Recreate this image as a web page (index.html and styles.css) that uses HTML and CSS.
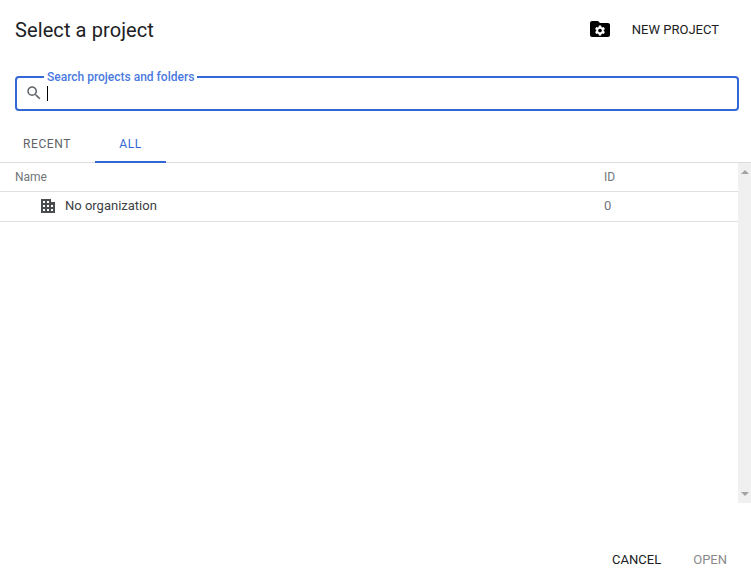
FILE: index.html
```html
<!DOCTYPE html>
<html>
<head>
    <title>Select a project</title>
    <link rel="stylesheet" href="styles.css">
</head>
<body>
    <div class="dialog">
        <div class="header">
            <h1 class="title">Select a project</h1>
            <svg class="new-icon" viewBox="0 0 24 24" width="24" height="24">
                <path d="M10 4H4c-1.100 0-2 .9-2 2v12c0 1.100.9 2 2 2h16c1.100 0 2-.9 2-2V8c0-1.100-.9-2-2-2h-8l-2-2z"/>
                <path fill="#fff" transform="translate(12 13.500) scale(.52) translate(-12 -12)" d="M19.140 12.940c.04-.3.06-.61.06-.94 0-.32-.02-.64-.07-.94l2.030-1.580a.49.49 0 0 0 .12-.61l-1.920-3.320a.488.488 0 0 0-.59-.22l-2.390.96c-.5-.38-1.030-.7-1.620-.94l-.36-2.540a.484.484 0 0 0-.48-.41h-3.840c-.24 0-.43.17-.47.41l-.36 2.540c-.59.24-1.130.57-1.620.94l-2.390-.96c-.22-.08-.47 0-.59.22L2.740 8.870c-.12.21-.08.47.12.61l2.030 1.580c-.05.3-.09.63-.09.94s.02.64.07.94l-2.030 1.580a.49.49 0 0 0-.12.61l1.920 3.320c.12.22.37.29.59.22l2.390-.96c.5.38 1.030.7 1.620.94l.36 2.540c.05.24.24.41.48.41h3.840c.24 0 .44-.17.47-.41l.36-2.540c.59-.24 1.130-.56 1.620-.94l2.390.96c.22.08.47 0 .59-.22l1.920-3.320c.12-.22.07-.47-.12-.61l-2.010-1.580zM12 15.600c-1.980 0-3.600-1.620-3.600-3.600s1.620-3.600 3.600-3.600 3.600 1.620 3.600 3.600-1.620 3.600-3.600 3.600z"/>
            </svg>
            <button class="text-btn new-btn">NEW PROJECT</button>
        </div>

        <fieldset class="search">
            <legend>Search projects and folders</legend>
            <svg viewBox="0 0 24 24" width="18" height="18">
                <path fill="#5f6368" d="M15.500 14h-.79l-.28-.27A6.471 6.471 0 0 0 16 9.500 6.500 6.500 0 1 0 9.500 16c1.610 0 3.090-.59 4.230-1.570l.27.28v.79l5 4.990L20.490 19l-4.990-5zm-6 0C7.010 14 5 11.990 5 9.500S7.010 5 9.500 5 14 7.010 14 9.500 11.990 14 9.500 14z"/>
            </svg>
            <span class="caret"></span>
        </fieldset>

        <div class="tabs">
            <div class="tab">RECENT</div>
            <div class="tab active">ALL</div>
        </div>

        <div class="list">
            <div class="table">
                <div class="row head">
                    <div class="name">Name</div>
                    <div class="id">ID</div>
                </div>
                <div class="row">
                    <div class="name org">
                        <svg viewBox="0 0 14 14" width="14" height="14">
                            <path fill="#4a4d50" fill-rule="evenodd" d="M0 0h10v3h4v11H0zM2 2v2h2V2zM6 2v2h2V2zM2 6v2h2V6zM6 6v2h2V6zM10 6v2h2V6zM2 10v2h2v-2zM6 10v2h2v-2zM10 10v2h2v-2z"/>
                        </svg>
                        No organization
                    </div>
                    <div class="id">0</div>
                </div>
            </div>
            <div class="scrollbar">
                <span class="arrow up"></span>
                <span class="arrow down"></span>
            </div>
        </div>

        <div class="footer">
            <button class="text-btn">CANCEL</button>
            <button class="text-btn disabled">OPEN</button>
        </div>
    </div>
</body>
</html>
```

FILE: styles.css
```css
body {
    margin: 0;
    background-color: #fff;
    font-family: Roboto, "Liberation Sans", sans-serif;
    color: #3c4043;
}
.dialog {
    height: 587px;
    display: flex;
    flex-direction: column;
    overflow: hidden;
}
.header {
    height: 60px;
    padding: 0 20px 0 15px;
    display: flex;
    align-items: center;
}
.title {
    margin: 0;
    flex: 1;
    font-size: 20px;
    font-weight: 400;
    letter-spacing: 0.1px;
    color: #202124;
}
.new-icon {
    margin: 0 8px 2px 0;
    fill: #000;
}
.text-btn {
    padding: 0 12px;
    border: none;
    background: none;
    font-family: inherit;
    font-size: 13px;
    font-weight: 400;
    color: #202124;
    cursor: pointer;
}
.new-btn {
    margin-bottom: 1px;
}
.text-btn.disabled {
    color: #8a8a8a;
}
.search {
    height: 41px;
    box-sizing: border-box;
    margin: 10px 12px 0 15px;
    padding: 0 8px;
    border: 2px solid #3367d6;
    border-radius: 4px;
    display: flex;
    align-items: center;
    gap: 4px;
}
.search legend {
    margin-left: 19px;
    padding: 0 3px;
    font-size: 12px;
    font-weight: 500;
    color: #4a7ae0;
}
.search svg {
    margin-bottom: 1px;
}
.caret {
    width: 1px;
    height: 15px;
    background-color: #000;
}
.tabs {
    height: 37px;
    margin-top: 14px;
    display: flex;
    border-bottom: 1px solid #dadce0;
}
.tab {
    width: 71px;
    box-sizing: border-box;
    padding-top: 1px;
    text-align: center;
    line-height: 37px;
    font-size: 12px;
    font-weight: 400;
    color: #5f6368;
    letter-spacing: 0.6px;
}
.tab:first-child {
    width: 95px;
    padding-right: 1px;
}
.tab.active {
    color: #3367d6;
    border-bottom: 2px solid #3367d6;
    height: 38px;
}
.list {
    height: 340px;
    display: flex;
}
.table {
    flex: 1;
    font-size: 13px;
}
.row {
    height: 27px;
    padding: 0 0 2px 15px;
    display: flex;
    align-items: center;
    border-bottom: 1px solid #e0e0e0;
}
.row.head {
    height: 27px;
    padding-bottom: 1px;
    font-size: 12px;
    color: #70757a;
}
.name {
    flex: 1;
}
.id {
    width: 134px;
    color: #70757a;
}
.org {
    padding-left: 26px;
    display: flex;
    align-items: center;
    gap: 10px;
}
.scrollbar {
    width: 13px;
    background-color: #f0f0f0;
    display: flex;
    flex-direction: column;
    justify-content: space-between;
    align-items: center;
    padding: 7px 0;
    box-sizing: border-box;
}
.arrow {
    width: 0;
    height: 0;
    border-left: 4px solid transparent;
    border-right: 4px solid transparent;
}
.arrow.up {
    border-bottom: 4px solid #a3a3a3;
}
.arrow.down {
    border-top: 4px solid #a3a3a3;
}
.footer {
    margin-top: 49px;
    padding-right: 12px;
    display: flex;
    justify-content: flex-end;
    gap: 8px;
}
```
